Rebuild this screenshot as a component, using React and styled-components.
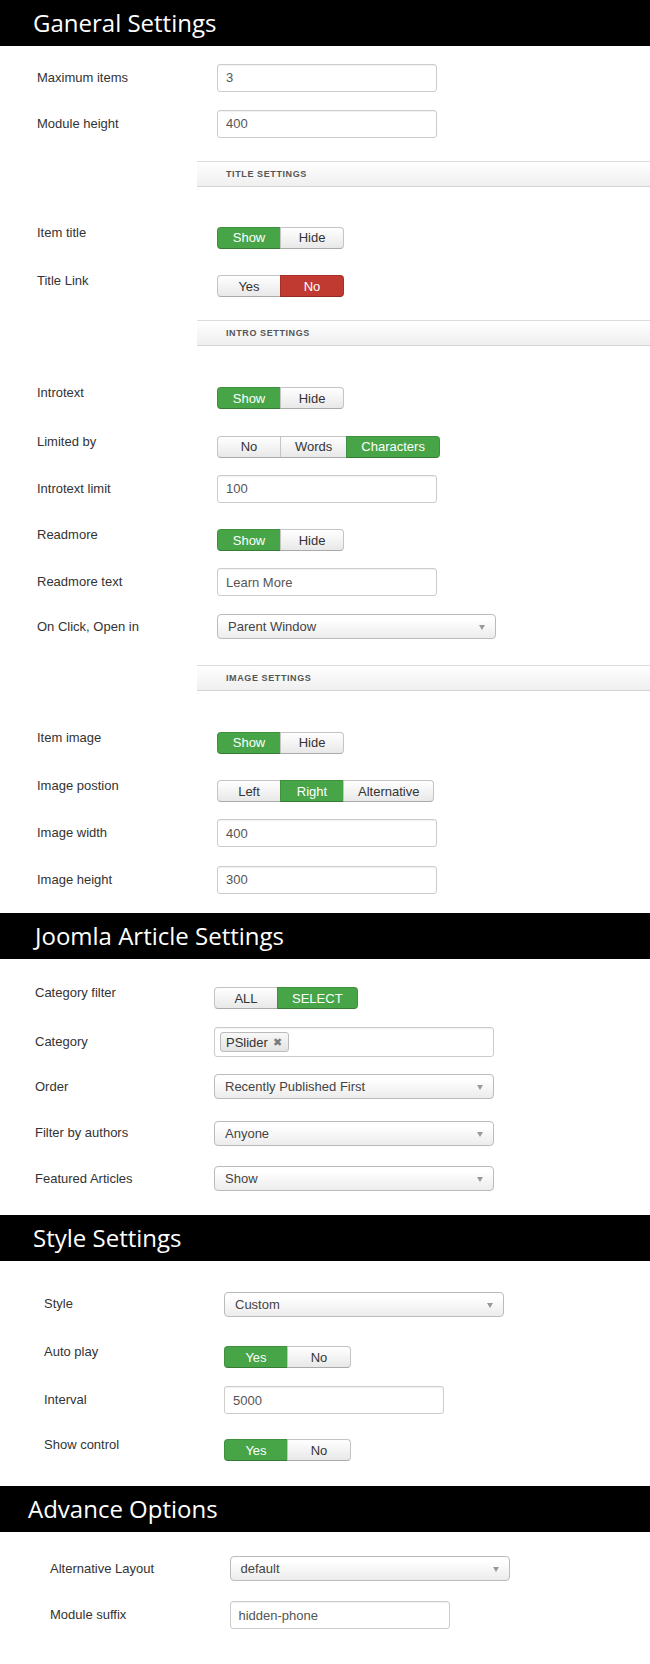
import React from 'react' ;
import styled, { createGlobalStyle } from 'styled-components' ;

const GlobalStyle = createGlobalStyle`
    * { box-sizing : border-box ; }
    body {
        margin : 0 ;
        background : #fff ;
        font-family : "Liberation Sans", Arial, sans-serif ;
        color : #333 ;
    }
`;

const Page = styled.div`
    width : 650px ;
    min-height : 1664px ;
    background : #fff ;
`;

const Section = styled.section`
    width : 100% ;
`;

const Header = styled.h2`
    margin : 0 ;
    height : 46px ;
    background : #000 ;
    color : #fff ;
    font-family : "Open Sans", "Noto Sans", sans-serif ;
    font-weight : 400 ;
    font-size : 24px ;
    line-height : 46px ;
    padding-left : ${ p => p.$pl }px ;
`;

const Body = styled.div`
    padding-left : ${ p => p.$pl }px ;
    padding-bottom : ${ p => p.$pb }px ;
    display : flex ;
    flex-direction : column ;
`;

const Row = styled.div`
    display : flex ;
    align-items : center ;
    margin-top : ${ p => p.$mt }px ;
`;

const Label = styled.div`
    flex : 0 0 ${ p => p.$w }px ;
    font-size : 13px ;
    line-height : 18px ;
    color : #333 ;
    transform : translateY(${ p => p.$raise ? -5 : 0 }px) ;
`;

const TextInput = styled.div`
    width : ${ p => p.$w || 220 }px ;
    height : ${ p => p.$h || 28 }px ;
    border : 1px solid #ccc ;
    border-radius : 3px ;
    box-shadow : inset 0 1px 1px rgba(0, 0, 0, 0.06) ;
    background : #fff ;
    display : flex ;
    align-items : center ;
    padding : 0 8px ;
    font-size : 13px ;
    color : #555 ;
`;

const Select = styled.div`
    position : relative ;
    width : ${ p => p.$w || 279 }px ;
    height : 25px ;
    border : 1px solid #bbb ;
    border-radius : 4px ;
    background : linear-gradient(#ffffff 20%, #ececec 100%) ;
    display : flex ;
    align-items : center ;
    padding : 0 10px ;
    font-size : 13px ;
    color : #444 ;

    &::after {
        content : "" ;
        position : absolute ;
        right : 10px ;
        top : 10px ;
        border-left : 3.5px solid transparent ;
        border-right : 3.5px solid transparent ;
        border-top : 5px solid #999 ;
    }
`;

const Toggle = styled.div`
    display : flex ;
    height : 22px ;
`;

const ToggleButton = styled.div`
    min-width : 64px ;
    padding : 0 14px ;
    display : flex ;
    align-items : center ;
    justify-content : center ;
    font-size : 13px ;
    color : ${ p => p.$tone ? '#fff' : '#333' } ;
    background : ${ p =>
        p.$tone === 'green' ? '#47a447' :
        p.$tone === 'red' ? '#c03a31' :
        'linear-gradient(#ffffff, #e8e8e8)' } ;
    border : 1px solid ${ p =>
        p.$tone === 'green' ? '#3e8f3e' :
        p.$tone === 'red' ? '#a8302a' :
        '#c4c4c4' } ;
    border-bottom-color : ${ p => p.$tone ? 'rgba(0,0,0,0.25)' : '#aaa' } ;
    margin-left : -1px ;

    &:first-child {
        margin-left : 0 ;
        border-radius : 4px 0 0 4px ;
    }
    &:last-child {
        border-radius : 0 4px 4px 0 ;
    }
`;

const SubBar = styled.div`
    flex : 1 ;
    margin-left : ${ p => p.$ml }px ;
    height : 26px ;
    border-top : 1px solid #dcdcdc ;
    border-bottom : 1px solid #d4d4d4 ;
    background : linear-gradient(#ffffff, #efefef) ;
    display : flex ;
    align-items : center ;
    padding-left : 29px ;
    font-size : 9px ;
    font-weight : 700 ;
    letter-spacing : 0.6px ;
    text-transform : uppercase ;
    color : #555 ;
`;

const Chip = styled.span`
    display : inline-flex ;
    align-items : center ;
    gap : 5px ;
    height : 20px ;
    margin-left : -3px ;
    padding : 0 6px 0 5px ;
    border : 1px solid #bbb ;
    border-radius : 3px ;
    background : linear-gradient(#f8f8f8, #e4e4e4) ;
    font-size : 13px ;
    color : #333 ;
`;

const ChipClose = styled.span`
    font-family : "DejaVu Sans", sans-serif ;
    font-size : 11px ;
    color : #7a7a7a ;
`;

const Switch = ({ options, active, tone = 'green' }) => (
    <Toggle>
        { options.map((option, index) => (
            <ToggleButton key={ option } $tone={ index === active ? tone : null }>
                { option }
            </ToggleButton>
        )) }
    </Toggle>
) ;

const Field = ({ label, w, mt, raise, children }) => (
    <Row $mt={ mt }>
        <Label $w={ w } $raise={ raise }>{ label }</Label>
        { children }
    </Row>
) ;

const App = () => {
    return (
        <>
            <GlobalStyle />
            <Page>
                <Section>
                    <Header $pl={ 33 }>Ganeral Settings</Header>
                    <Body $pl={ 37 } $pb={ 19 }>
                        <Field label="Maximum items" w={ 180 } mt={ 17.5 }>
                            <TextInput>3</TextInput>
                        </Field>
                        <Field label="Module height" w={ 180 } mt={ 18 }>
                            <TextInput>400</TextInput>
                        </Field>

                        <Row $mt={ 23.5 }>
                            <SubBar $ml={ 160 }>Title Settings</SubBar>
                        </Row>

                        <Field label="Item title" w={ 180 } mt={ 39.5 } raise>
                            <Switch options={ ['Show', 'Hide'] } active={ 0 } />
                        </Field>
                        <Field label="Title Link" w={ 180 } mt={ 26.5 } raise>
                            <Switch options={ ['Yes', 'No'] } active={ 1 } tone="red" />
                        </Field>

                        <Row $mt={ 23 }>
                            <SubBar $ml={ 160 }>Intro Settings</SubBar>
                        </Row>

                        <Field label="Introtext" w={ 180 } mt={ 41 } raise>
                            <Switch options={ ['Show', 'Hide'] } active={ 0 } />
                        </Field>
                        <Field label="Limited by" w={ 180 } mt={ 26.5 } raise>
                            <Switch options={ ['No', 'Words', 'Characters'] } active={ 2 } />
                        </Field>
                        <Field label="Introtext limit" w={ 180 } mt={ 17 }>
                            <TextInput>100</TextInput>
                        </Field>
                        <Field label="Readmore" w={ 180 } mt={ 26.5 } raise>
                            <Switch options={ ['Show', 'Hide'] } active={ 0 } />
                        </Field>
                        <Field label="Readmore text" w={ 180 } mt={ 17 }>
                            <TextInput>Learn More</TextInput>
                        </Field>
                        <Field label="On Click, Open in" w={ 180 } mt={ 18 }>
                            <Select>Parent Window</Select>
                        </Field>

                        <Row $mt={ 25.5 }>
                            <SubBar $ml={ 160 }>Image Settings</SubBar>
                        </Row>

                        <Field label="Item image" w={ 180 } mt={ 41 } raise>
                            <Switch options={ ['Show', 'Hide'] } active={ 0 } />
                        </Field>
                        <Field label="Image postion" w={ 180 } mt={ 26.5 } raise>
                            <Switch options={ ['Left', 'Right', 'Alternative'] } active={ 1 } />
                        </Field>
                        <Field label="Image width" w={ 180 } mt={ 17 }>
                            <TextInput>400</TextInput>
                        </Field>
                        <Field label="Image height" w={ 180 } mt={ 18.5 }>
                            <TextInput>300</TextInput>
                        </Field>
                    </Body>
                </Section>

                <Section>
                    <Header $pl={ 35 }>Joomla Article Settings</Header>
                    <Body $pl={ 35 } $pb={ 23.5 }>
                        <Field label="Category filter" w={ 179 } mt={ 28.5 } raise>
                            <Switch options={ ['ALL', 'SELECT'] } active={ 1 } />
                        </Field>
                        <Field label="Category" w={ 179 } mt={ 18 }>
                            <TextInput $w={ 280 } $h={ 30 }>
                                <Chip>PSlider <ChipClose>✖</ChipClose></Chip>
                            </TextInput>
                        </Field>
                        <Field label="Order" w={ 179 } mt={ 17 }>
                            <Select $w={ 280 }>Recently Published First</Select>
                        </Field>
                        <Field label="Filter by authors" w={ 179 } mt={ 21.5 }>
                            <Select $w={ 280 }>Anyone</Select>
                        </Field>
                        <Field label="Featured Articles" w={ 179 } mt={ 20.5 }>
                            <Select $w={ 280 }>Show</Select>
                        </Field>
                    </Body>
                </Section>

                <Section>
                    <Header $pl={ 33 }>Style Settings</Header>
                    <Body $pl={ 44 } $pb={ 25 }>
                        <Field label="Style" w={ 180 } mt={ 31 }>
                            <Select $w={ 280 }>Custom</Select>
                        </Field>
                        <Field label="Auto play" w={ 180 } mt={ 29.5 } raise>
                            <Switch options={ ['Yes', 'No'] } active={ 0 } />
                        </Field>
                        <Field label="Interval" w={ 180 } mt={ 18 }>
                            <TextInput>5000</TextInput>
                        </Field>
                        <Field label="Show control" w={ 180 } mt={ 25 } raise>
                            <Switch options={ ['Yes', 'No'] } active={ 0 } />
                        </Field>
                    </Body>
                </Section>

                <Section>
                    <Header $pl={ 28 }>Advance Options</Header>
                    <Body $pl={ 50 } $pb={ 30 }>
                        <Field label="Alternative Layout" w={ 179.5 } mt={ 24 }>
                            <Select $w={ 280 }>default</Select>
                        </Field>
                        <Field label="Module suffix" w={ 179.5 } mt={ 20 }>
                            <TextInput>hidden-phone</TextInput>
                        </Field>
                    </Body>
                </Section>
            </Page>
        </>
    ) ;
} ;

export default App ;
